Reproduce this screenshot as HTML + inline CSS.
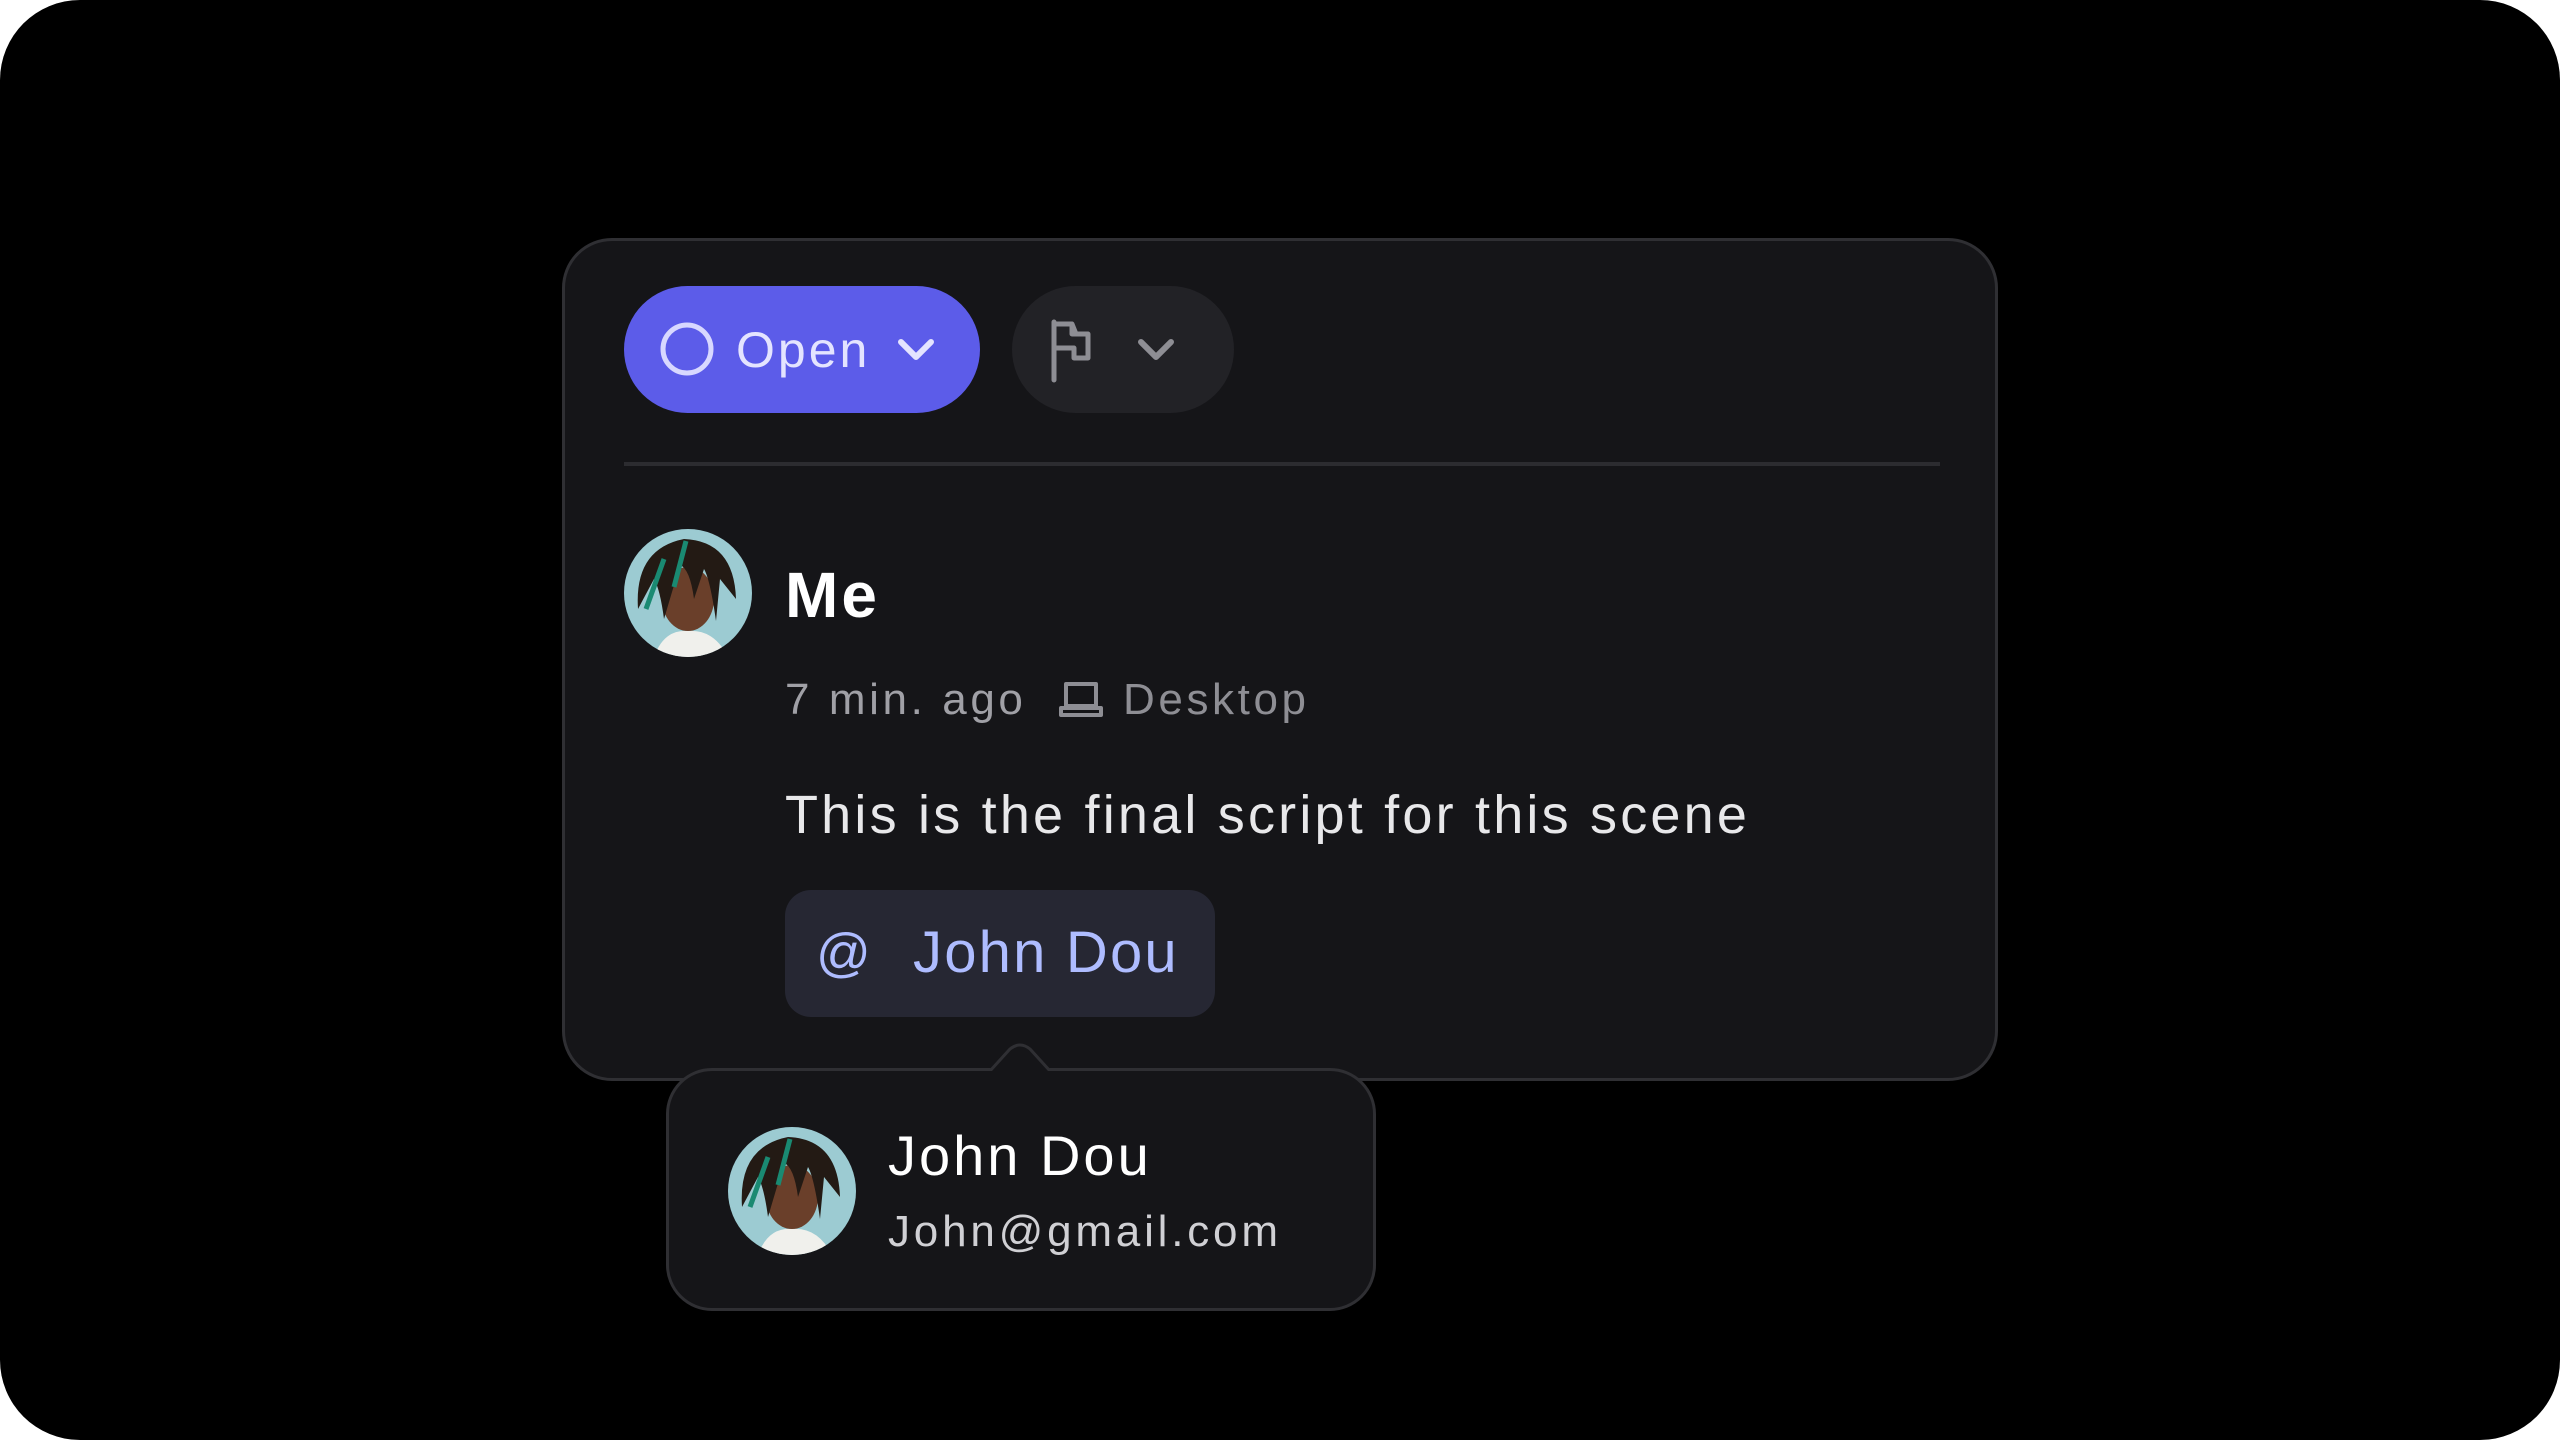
<!DOCTYPE html>
<html><head><meta charset="utf-8"><style>
*{margin:0;padding:0;box-sizing:border-box}
html,body{width:2560px;height:1440px;background:#fff;overflow:hidden}
body{font-family:"Liberation Sans",sans-serif}
.bg{position:absolute;left:0;top:0;width:2560px;height:1440px;background:#000;border-radius:80px}
.card{position:absolute;left:562px;top:238px;width:1436px;height:843px;background:#151518;border:3px solid #2f2f33;border-radius:50px}
.abs{position:absolute}
.open{left:624px;top:286px;width:356px;height:127px;border-radius:64px;background:#5c5ce9}
.flagb{left:1012px;top:286px;width:222px;height:127px;border-radius:64px;background:#222226}
.div{left:624px;top:462px;width:1316px;height:4px;background:#2c2c30}
.t{position:absolute;white-space:nowrap;line-height:1}
.chip{left:785px;top:890px;width:430px;height:127px;border-radius:26px;background:#262733}
.pop{left:666px;top:1068px;width:710px;height:243px;background:#151518;border:3px solid #2f2f33;border-radius:46px}
</style></head><body>
<div class="bg"></div>
<div class="card"></div>
<div class="abs open"></div>
<svg class="abs" style="left:660px;top:322px" width="54" height="54"><circle cx="27" cy="27" r="24" fill="none" stroke="#d8d8ff" stroke-width="5"/></svg>
<div class="t" style="left:736px;top:325px;font-size:50px;color:#e4e4ff;letter-spacing:3px">Open</div>
<svg class="abs" style="left:896px;top:336px" width="40" height="28"><path d="M5 6 L20 21 L35 6" fill="none" stroke="#e4e4ff" stroke-width="6" stroke-linecap="round" stroke-linejoin="round"/></svg>
<div class="abs flagb"></div>
<svg class="abs" style="left:1050px;top:318px" width="50" height="66"><path d="M4 4 V62 M4 6 H22 V16 H38 V40 H24 V30 H4 M22 6 L26 16" fill="none" stroke="#8e8e94" stroke-width="5" stroke-linejoin="round" stroke-linecap="round"/></svg>
<svg class="abs" style="left:1136px;top:336px" width="40" height="28"><path d="M5 6 L20 21 L35 6" fill="none" stroke="#8e8e94" stroke-width="6" stroke-linecap="round" stroke-linejoin="round"/></svg>
<div class="abs div"></div>

<svg class="abs" style="left:624px;top:529px" width="128" height="128" viewBox="0 0 128 128">
<defs><clipPath id="c1"><circle cx="64" cy="64" r="64"/></clipPath></defs>
<g clip-path="url(#c1)"><rect width="128" height="128" fill="#9ccbd2"/>
<path d="M30 128 Q40 100 64 102 Q90 100 104 128Z" fill="#f0f0ec"/>
<ellipse cx="64" cy="70" rx="26" ry="32" fill="#6a3f2a"/>
<path d="M14 80 Q10 20 60 10 Q110 12 112 70 Q104 60 96 50 L92 92 Q86 50 80 40 L70 70 Q66 40 56 36 L40 90 Q36 60 30 50Z" fill="#231a14"/>
<path d="M40 30 L22 80" stroke="#1a8a72" stroke-width="5"/><path d="M62 12 L50 58" stroke="#1a8a72" stroke-width="5"/></g></svg>
<div class="t" style="left:785px;top:563px;font-size:64px;font-weight:bold;color:#fff;letter-spacing:3px">Me</div>
<div class="t" style="left:785px;top:678px;font-size:44px;color:#a0a0a6;letter-spacing:3.6px">7 min. ago</div>
<svg class="abs" style="left:1058px;top:680px" width="46" height="40"><path d="M8 4 H38 V26 H8Z M3 28 H43 V35 H3Z" fill="none" stroke="#8e8e94" stroke-width="4" stroke-linejoin="round"/></svg>
<div class="t" style="left:1123px;top:678px;font-size:44px;color:#8e8e94;letter-spacing:3.6px">Desktop</div>
<div class="t" style="left:785px;top:788px;font-size:54px;color:#e8e8ea;letter-spacing:3.2px">This is the final script for this scene</div>
<div class="abs chip"></div>
<div class="t" style="left:816px;top:926px;font-size:54px;color:#aebcff">@</div>
<div class="t" style="left:913px;top:924px;font-size:58px;color:#aebcff;letter-spacing:2.2px">John Dou</div>

<div class="abs pop"></div>
<svg class="abs" style="left:990px;top:1043px" width="60" height="30"><path d="M0 28 L20 6 Q30 -2 40 6 L60 28" fill="#151518" stroke="#2f2f33" stroke-width="3"/><rect x="0" y="28" width="60" height="6" fill="#151518"/></svg>
<svg class="abs" style="left:728px;top:1127px" width="128" height="128" viewBox="0 0 128 128">
<defs><clipPath id="c2"><circle cx="64" cy="64" r="64"/></clipPath></defs>
<g clip-path="url(#c2)"><rect width="128" height="128" fill="#9ccbd2"/>
<path d="M30 128 Q40 100 64 102 Q90 100 104 128Z" fill="#f0f0ec"/>
<ellipse cx="64" cy="70" rx="26" ry="32" fill="#6a3f2a"/>
<path d="M14 80 Q10 20 60 10 Q110 12 112 70 Q104 60 96 50 L92 92 Q86 50 80 40 L70 70 Q66 40 56 36 L40 90 Q36 60 30 50Z" fill="#231a14"/>
<path d="M40 30 L22 80" stroke="#1a8a72" stroke-width="5"/><path d="M62 12 L50 58" stroke="#1a8a72" stroke-width="5"/></g></svg>
<div class="t" style="left:888px;top:1128px;font-size:56px;color:#fff;letter-spacing:3px">John Dou</div>
<div class="t" style="left:888px;top:1210px;font-size:44px;color:#d0d0d4;letter-spacing:3.8px">John@gmail.com</div>
</body></html>
